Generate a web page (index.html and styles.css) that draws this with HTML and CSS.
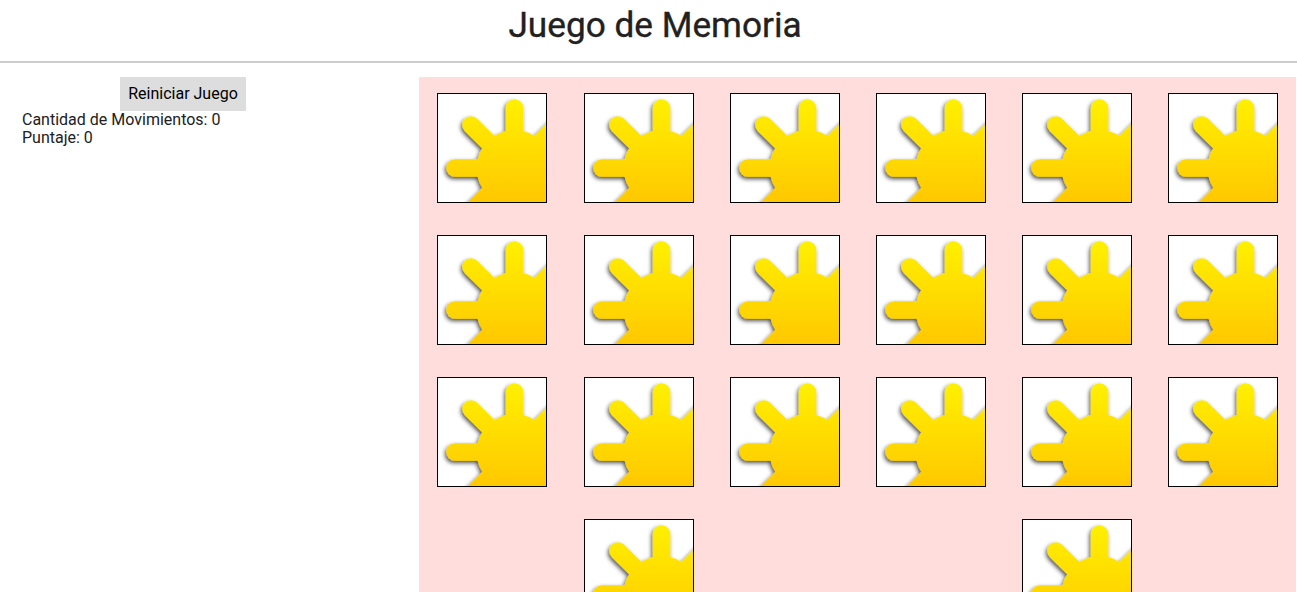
FILE: index.html
```html
<!DOCTYPE html>
<html lang="es">
<head>
<meta charset="utf-8">
<title>Juego de Memoria</title>
<link rel="stylesheet" href="styles.css">
</head>
<body>
<svg class="sprite" width="0" height="0" aria-hidden="true">
  <defs>
    <linearGradient id="sun-fill" gradientUnits="userSpaceOnUse" x1="0" y1="6" x2="0" y2="108">
      <stop offset="0" stop-color="#fff000"/>
      <stop offset="1" stop-color="#ffc800"/>
    </linearGradient>
    <filter id="sun-shadow" filterUnits="userSpaceOnUse" x="-40" y="-40" width="240" height="240">
      <feDropShadow dx="-1.2" dy="2.2" stdDeviation="2" flood-color="#000" flood-opacity="0.7"/>
    </filter>
    <symbol id="sun" viewBox="0 0 108 108">
      <g filter="url(#sun-shadow)">
        <g fill="url(#sun-fill)" stroke="url(#sun-fill)" stroke-width="17.5" stroke-linecap="round">
          <circle cx="76.5" cy="74" r="38" stroke="none"/>
          <polygon points="76.5,74 150,0.5 150,150 3,150 3,147.5" stroke="none"/>
          <line x1="76.5" y1="74" x2="76.5" y2="14"/>
          <line x1="76.5" y1="74" x2="33" y2="31"/>
          <line x1="76.5" y1="74" x2="17" y2="74"/>
          <line x1="76.5" y1="74" x2="150" y2="0.5"/>
          <line x1="76.5" y1="74" x2="3" y2="147.5"/>
        </g>
      </g>
    </symbol>
  </defs>
</svg>
<header class="top">
  <h1 class="title">Juego de Memoria</h1>
</header>
<main class="layout">
  <aside class="side">
    <button class="restart" type="button">Reiniciar Juego</button>
    <p class="stat">Cantidad de Movimientos: 0</p>
    <p class="stat">Puntaje: 0</p>
  </aside>
  <section class="board">
    <div class="card"><svg class="sun"><use href="#sun"/></svg></div>
    <div class="card"><svg class="sun"><use href="#sun"/></svg></div>
    <div class="card"><svg class="sun"><use href="#sun"/></svg></div>
    <div class="card"><svg class="sun"><use href="#sun"/></svg></div>
    <div class="card"><svg class="sun"><use href="#sun"/></svg></div>
    <div class="card"><svg class="sun"><use href="#sun"/></svg></div>
    <div class="card"><svg class="sun"><use href="#sun"/></svg></div>
    <div class="card"><svg class="sun"><use href="#sun"/></svg></div>
    <div class="card"><svg class="sun"><use href="#sun"/></svg></div>
    <div class="card"><svg class="sun"><use href="#sun"/></svg></div>
    <div class="card"><svg class="sun"><use href="#sun"/></svg></div>
    <div class="card"><svg class="sun"><use href="#sun"/></svg></div>
    <div class="card"><svg class="sun"><use href="#sun"/></svg></div>
    <div class="card"><svg class="sun"><use href="#sun"/></svg></div>
    <div class="card"><svg class="sun"><use href="#sun"/></svg></div>
    <div class="card"><svg class="sun"><use href="#sun"/></svg></div>
    <div class="card"><svg class="sun"><use href="#sun"/></svg></div>
    <div class="card"><svg class="sun"><use href="#sun"/></svg></div>
    <div class="card"><svg class="sun"><use href="#sun"/></svg></div>
    <div class="card"><svg class="sun"><use href="#sun"/></svg></div>
  </section>
</main>
</body>
</html>
```
FILE: styles.css
```css
* {
  box-sizing: border-box;
}

body {
  margin: 0;
  font-family: Roboto, "Liberation Sans", sans-serif;
  font-size: 16px;
  line-height: 18px;
  color: #212121;
  background: #fff;
}

.sprite {
  display: block;
}

.top {
  height: 63px;
  padding-left: 13px;
  border-bottom: 2px solid #ccc;
  text-align: center;
}

.title {
  margin: 0;
  font-size: 35.2px;
  font-weight: 400;
  line-height: 51px;
  -webkit-text-stroke: 0.35px #212121;
}

.layout {
  display: flex;
  align-items: flex-start;
  margin-top: 14px;
}

.side {
  flex: 0 0 419.4px;
  display: flex;
  flex-direction: column;
  padding-left: 22px;
}

.restart {
  align-self: flex-start;
  margin-left: 98px;
  width: 126px;
  height: 34px;
  padding: 0;
  border: 0;
  background: #ddd;
  color: #000;
  font: inherit;
}

.stat {
  margin: 0;
}

.board {
  flex: 0 0 876.8px;
  display: flex;
  flex-wrap: wrap;
  justify-content: space-around;
  background: #fdd;
}

.card {
  width: 110px;
  height: 110px;
  margin: 16px;
  border: 1px solid #000;
  background: #fff;
}

.sun {
  display: block;
  width: 108px;
  height: 108px;
}
```
